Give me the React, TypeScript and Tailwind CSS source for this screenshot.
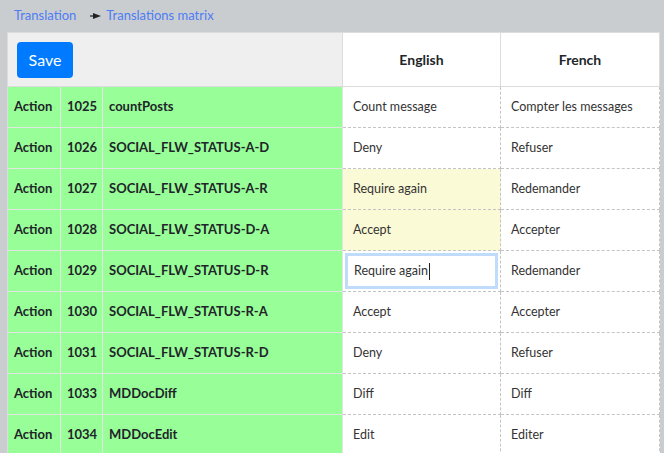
import React from 'react';

type Row = { id: number; key: string; en: string; fr: string; state?: 'dirty' | 'focus' };

const ROWS: Row[] = [
  { id: 1025, key: 'countPosts', en: 'Count message', fr: 'Compter les messages' },
  { id: 1026, key: 'SOCIAL_FLW_STATUS-A-D', en: 'Deny', fr: 'Refuser' },
  { id: 1027, key: 'SOCIAL_FLW_STATUS-A-R', en: 'Require again', fr: 'Redemander', state: 'dirty' },
  { id: 1028, key: 'SOCIAL_FLW_STATUS-D-A', en: 'Accept', fr: 'Accepter', state: 'dirty' },
  { id: 1029, key: 'SOCIAL_FLW_STATUS-D-R', en: 'Require again', fr: 'Redemander', state: 'focus' },
  { id: 1030, key: 'SOCIAL_FLW_STATUS-R-A', en: 'Accept', fr: 'Accepter' },
  { id: 1031, key: 'SOCIAL_FLW_STATUS-R-D', en: 'Deny', fr: 'Refuser' },
  { id: 1033, key: 'MDDocDiff', en: 'Diff', fr: 'Diff' },
  { id: 1034, key: 'MDDocEdit', en: 'Edit', fr: 'Editer' },
];

const keyCell =
  'border-r border-b border-solid border-[#e0e6e0] bg-[#98fe98] px-[6px] text-[13px] font-bold text-[#212529]';
const valCell = 'border-r border-b border-dashed border-[#c4c4c4] text-[12.5px] text-[#333]';

export default function App() {
  return (
    <div className="min-h-screen bg-[#c9cdd0] font-['Lato','Noto_Sans',sans-serif]">
      <div className="flex h-[32px] items-center pl-[14px] text-[13px] text-[#4d7cf5]">
        <span>Translation</span>
        <svg width="11" height="6" viewBox="0 0 11 6" className="ml-[14px] mr-[5px]">
          <rect x="0" y="2.4" width="5" height="1.2" fill="#222" />
          <path d="M3 0 L11 3 L3 6 Z" fill="#222" />
        </svg>
        <span>Translations matrix</span>
      </div>
      <table className="ml-[7px] w-[653px] table-fixed border-separate border-spacing-0 border-l border-t border-[#dcdcdc]">
        <colgroup>
          <col className="w-[53px]" />
          <col className="w-[42px]" />
          <col className="w-[240px]" />
          <col className="w-[158px]" />
          <col className="w-[159px]" />
        </colgroup>
        <thead>
          <tr className="h-[54px]">
            <th colSpan={3} className="border-r border-b border-[#dcdcdc] bg-[#efefef] px-[9px] text-left">
              <button className="h-[36px] w-[56px] rounded-[4px] bg-[#007bff] text-[16px] font-normal text-white">
                Save
              </button>
            </th>
            <th className="border-r border-b border-[#dcdcdc] bg-white text-[14px] font-bold text-[#212529]">English</th>
            <th className="border-r border-b border-[#dcdcdc] bg-white text-[14px] font-bold text-[#212529]">French</th>
          </tr>
        </thead>
        <tbody>
          {ROWS.map((r) => (
            <tr key={r.id} className="h-[41px]">
              <td className={keyCell}>Action</td>
              <td className={keyCell}>{r.id}</td>
              <td className={keyCell}>{r.key}</td>
              {r.state === 'focus' ? (
                <td className={`${valCell} bg-white p-[2px]`}>
                  <div className="flex h-[36px] items-center border-[3px] border-[#bfdcfb] px-[6px]">
                    <span>{r.en}</span>
                    <span className="ml-px h-[17px] w-px bg-[#222]" />
                  </div>
                </td>
              ) : (
                <td className={`${valCell} px-[10px] ${r.state === 'dirty' ? 'bg-[#fafad6]' : 'bg-white'}`}>
                  {r.en}
                </td>
              )}
              <td className={`${valCell} bg-white px-[10px]`}>{r.fr}</td>
            </tr>
          ))}
        </tbody>
      </table>
    </div>
  );
}
